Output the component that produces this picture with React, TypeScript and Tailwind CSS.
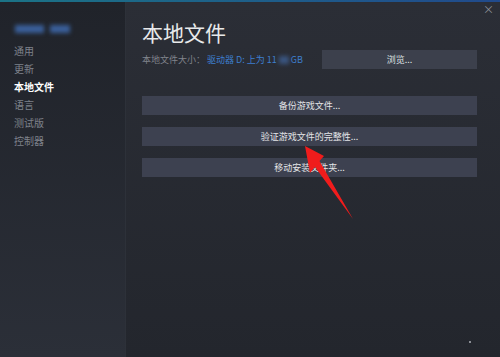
import React from "react";

const font = { fontFamily: '"Noto Sans CJK SC", "Noto Sans", sans-serif' };

export default function App() {
  const items = ["通用", "更新", "本地文件", "语言", "测试版", "控制器"];
  return (
    <div className="relative w-[500px] h-[357px] overflow-hidden bg-[#262930]" style={font}>
      <div className="h-[2px] bg-gradient-to-r from-[#1b7386] to-[#214a8c]" />
      <div className="flex h-[355px]">
        <div className="w-[125px] bg-gradient-to-b from-[#20232a] to-[#2b2f38] pt-[23px]">
          <div className="flex gap-[6px] pl-[15px] h-[8px] mb-[9px]">
            <div className="w-[29px] h-[8px] bg-[#3a5f9a] blur-[2px]" />
            <div className="w-[20px] h-[8px] bg-[#3a5f9a] blur-[2px]" />
          </div>
          <div className="flex flex-col pl-[14px]">
            {items.map((t) => (
              <div
                key={t}
                className={
                  "text-[10px] leading-[18px] " +
                  (t === "本地文件" ? "text-white font-bold" : "text-[#7e828b]")
                }
              >
                {t}
              </div>
            ))}
          </div>
        </div>
        <div className="relative flex-1 flex flex-col pl-[16px] pr-[23px] pt-[16px] bg-gradient-to-b from-[#2b2e36] to-[#23262d] border-l border-[#2d3139]">
          <div className="absolute right-[6px] top-[1px] text-[11px] leading-[12px] text-[#8d9097]">×</div>
          <div className="text-[21px] leading-[28px] text-[#e8e9ea]">本地文件</div>
          <div className="mt-[4px] flex items-center h-[19px]">
            <div className="flex-1 flex items-center text-[9px]">
              <span className="text-[#80848c]">本地文件大小：</span>
              <span className="ml-[2px] text-[#3d7fd0]">驱动器 D: 上为 11 </span>
              <span className="inline-block w-[10px] h-[8px] mx-[2px] bg-[#3a5580] blur-[2px]" />
              <span className="text-[#3d7fd0]">GB</span>
            </div>
            <div className="w-[155px] h-[19px] bg-[#3c404c] flex items-center justify-center text-[9px] text-[#dfe0e2]">
              浏览...
            </div>
          </div>
          <div className="mt-[27px] flex flex-col gap-[12px]">
            {["备份游戏文件...", "验证游戏文件的完整性...", "移动安装文件夹..."].map((t) => (
              <div
                key={t}
                className="h-[19px] bg-[#3d4150] flex items-center justify-center text-[9px] text-[#e4e5e7]"
              >
                {t}
              </div>
            ))}
          </div>
        </div>
      </div>
      <svg className="absolute left-0 top-0" width="500" height="357" viewBox="0 0 500 357">
        <polygon
          points="305,146 324,156 319.5,161 353,219 315,167 310,173"
          fill="#f01c1c"
        />
      </svg>
      <div className="absolute left-[469px] top-[341px] w-[2px] h-[2px] bg-[#8a8d94]" />
    </div>
  );
}
